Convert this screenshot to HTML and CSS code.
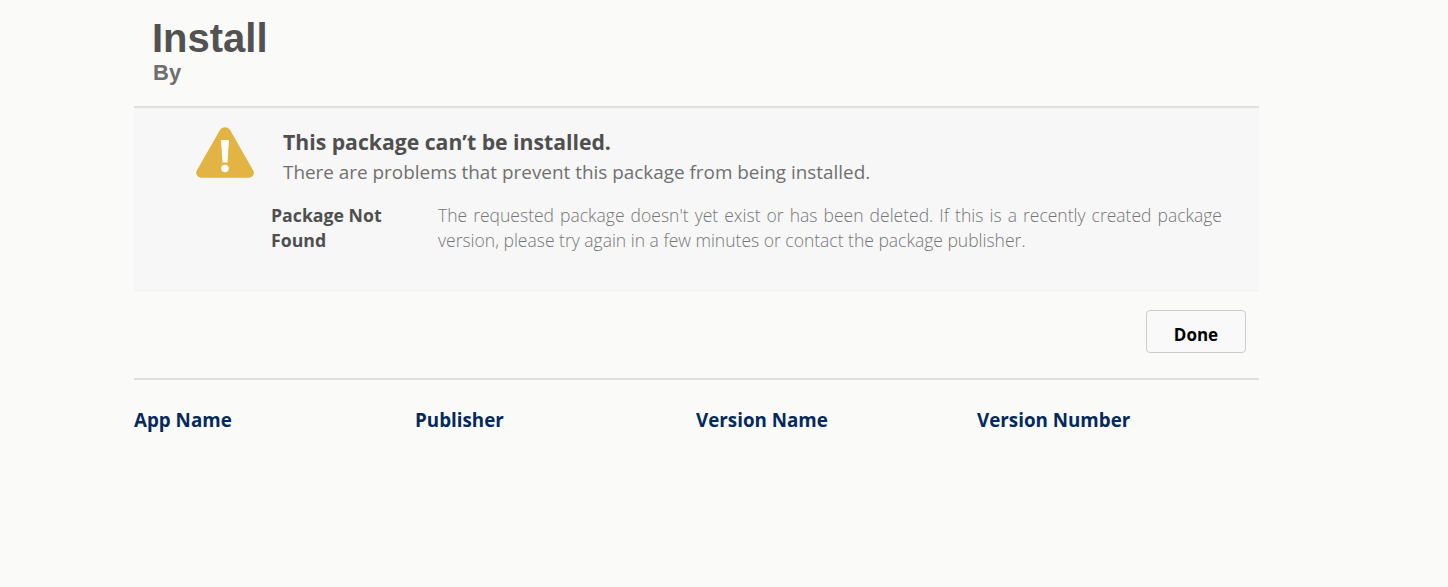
FILE: index.html
```html
<!DOCTYPE html>
<html lang="en">
<head>
<meta charset="utf-8">
<title>Install</title>
<link rel="stylesheet" href="styles.css">
</head>
<body>
<main class="page">
  <header class="head">
    <h1 class="title">Install</h1>
    <div class="by">By</div>
  </header>
  <section class="panel">
    <div class="summary">
      <svg class="warn" viewBox="0 0 58 51" width="58" height="51" aria-hidden="true">
        <path fill="#e1b444" d="M23.800 3.300a6 6 0 0 1 10.400 0l23 40.200a5 5 0 0 1-4.300 7.300H5.100a5 5 0 0 1-4.300-7.300z"/>
        <path fill="#fbfbf9" d="M25 13h8l-1.500 22.500h-5z"/>
        <circle fill="#fbfbf9" cx="29" cy="41.500" r="3.800"/>
      </svg>
      <div class="summary-text">
        <h2 class="sum-title">This package can’t be installed.</h2>
        <p class="sum-sub">There are problems that prevent this package from being installed.</p>
      </div>
    </div>
    <div class="problem">
      <div class="prob-name">Package Not Found</div>
      <p class="prob-desc">The requested package doesn't yet exist or has been deleted. If this is a recently created package version, please try again in a few minutes or contact the package publisher.</p>
    </div>
  </section>
  <div class="actions"><button class="done" type="button">Done</button></div>
  <div class="cols">
    <div class="col">App Name</div>
    <div class="col">Publisher</div>
    <div class="col">Version Name</div>
    <div class="col">Version Number</div>
  </div>
</main>
</body>
</html>
```
FILE: styles.css
```css
html, body { margin: 0; padding: 0; height: 100%; }
body { background: #fafaf9; font-family: "Open Sans", "Noto Sans", sans-serif; overflow: hidden; }
.page { width: 1125px; margin-left: 134px; }
.head { padding: 17px 0 0 18px; height: 106px; box-sizing: border-box; font-family: "Liberation Sans", Arial, sans-serif; font-weight: 700; }
.title { margin: 0; font-size: 40px; line-height: 42px; color: #525252; font-weight: 700; }
.by { font-size: 22px; line-height: 26px; margin: 1px 0 0 1px; color: #706e6b; }
.panel { background: #f7f7f7; border-top: 2px solid #dfdfdd; border-bottom: 1px solid #f0f0ee; height: 185px; box-sizing: border-box; }
.summary { display: flex; padding: 19px 0 0 62px; }
.warn { flex: none; margin-right: 29px; }
.sum-title { margin: 1px 0 0; font-size: 21.200px; line-height: 27px; font-weight: 700; color: #4f4f4f; }
.sum-sub { margin: 4px 0 0; font-size: 18.900px; line-height: 27px; font-weight: 400; color: #707070; }
.problem { display: flex; padding: 0 37px 0 137px; margin-top: 17px; }
.prob-name { flex: none; width: 167px; box-sizing: border-box; padding-right: 30px; font-size: 17.700px; line-height: 25px; font-weight: 700; color: #4f4f4f; }
.prob-desc { margin: 0; flex: 1; font-size: 17.500px; line-height: 25px; font-weight: 300; color: #767676; text-align: justify; }
.actions { display: flex; justify-content: flex-end; padding: 19px 13px 0 0; height: 89px; box-sizing: border-box; border-bottom: 2px solid #dfdfdd; }
.done { width: 100px; height: 43px; background: #f9f9f9; border: 1px solid #cccccc; border-radius: 4px; font-family: inherit; font-size: 17px; font-weight: 700; color: #000; padding: 5px 0 0; }
.cols { display: grid; grid-template-columns: repeat(4, 281px); padding-top: 27px; }
.col { font-size: 18.800px; line-height: 26px; font-weight: 700; color: #04295c; }
```
